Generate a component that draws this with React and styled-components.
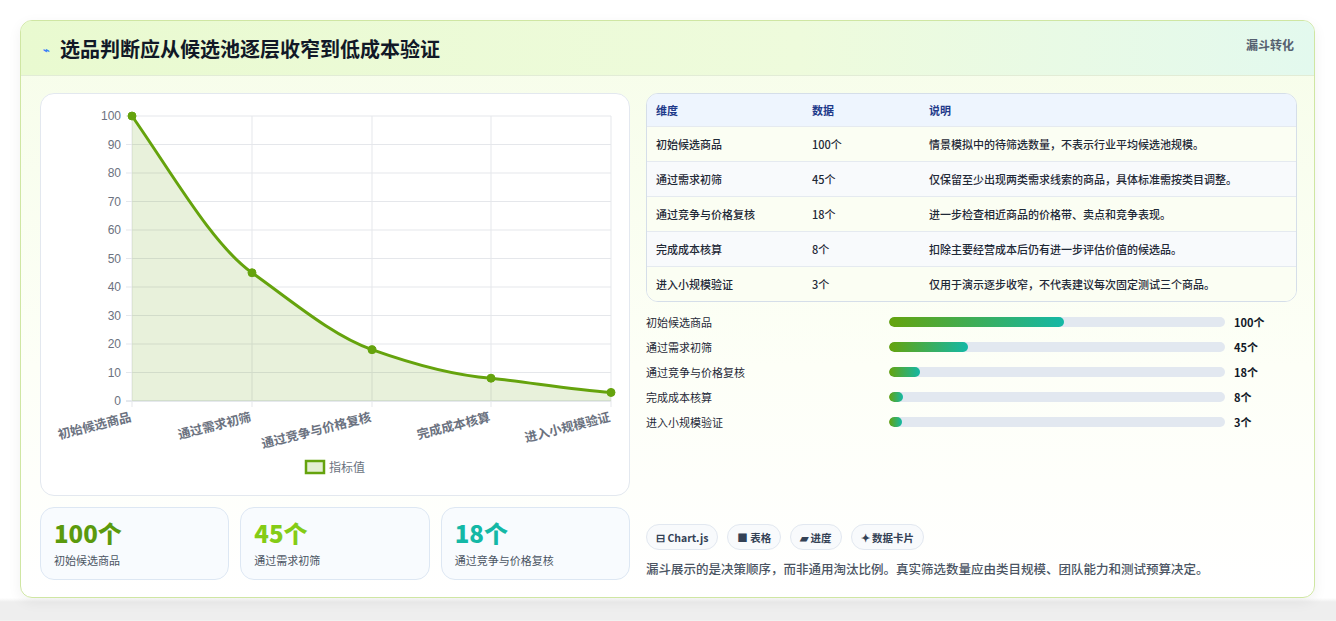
import styled, { createGlobalStyle } from "styled-components";

const Global = createGlobalStyle`
  body { margin: 0; background: #f1f2f1; font-family: "Noto Sans CJK SC", "Noto Sans", sans-serif; }
`;

const Page = styled.div`
  padding: 20px 20px 22px 20px;
  background: linear-gradient(#ffffff 0, #ffffff 598px, #eeeeee 602px);
`;

const Card = styled.div`
  width: 1295px;
  height: 578px;
  box-sizing: border-box;
  border: 1px solid #cfe6a3;
  border-radius: 12px;
  background: linear-gradient(180deg, #f6fde9 0%, #fdfff7 60%, #ffffff 100%);
  box-shadow: 0 4px 14px rgba(0, 0, 0, 0.06);
  overflow: hidden;
`;

const Header = styled.div`
  height: 55px;
  box-sizing: border-box;
  display: flex;
  align-items: flex-start;
  justify-content: space-between;
  padding: 13px 20px 0 22px;
  background: linear-gradient(90deg, #e9fad0 0%, #eefbdc 60%, #e3f9ee 100%);
  border-bottom: 1px solid #e2ecd6;
`;

const Title = styled.h1`
  margin: 0;
  font-size: 20px;
  font-weight: 700;
  color: #111827;
  display: flex;
  align-items: center;
  gap: 10px;
`;

const Tag = styled.span`
  font-size: 12px;
  font-weight: 700;
  color: #556070;
  margin-top: 2px;
`;

const Body = styled.div`
  display: grid;
  grid-template-columns: 590px 651px;
  gap: 16px;
  padding: 17px 19px 0 19px;
`;

const Col = styled.div`
  display: flex;
  flex-direction: column;
`;

const ChartBox = styled.div`
  height: 403px;
  box-sizing: border-box;
  border: 1px solid #e3e8ef;
  border-radius: 14px;
  background: #fff;
`;

const Stats = styled.div`
  display: grid;
  grid-template-columns: repeat(3, 1fr);
  gap: 11px;
  margin-top: 11px;
`;

const Stat = styled.div`
  height: 73px;
  box-sizing: border-box;
  border: 1px solid #dde7f3;
  border-radius: 14px;
  background: #f8fbfe;
  padding: 10px 13px;
`;

const StatNum = styled.div`
  font-size: 24px;
  font-weight: 800;
  line-height: 30px;
  color: ${(p) => p.$c};
`;

const StatLabel = styled.div`
  font-size: 11px;
  color: #4b5563;
  margin-top: 4px;
`;

const Table = styled.div`
  border: 1px solid #d5dee9;
  border-radius: 12px;
  overflow: hidden;
  background: #fff;
`;

const Row = styled.div`
  display: grid;
  grid-template-columns: 156px 117px 1fr;
  height: ${(p) => (p.$head ? 32 : 34)}px;
  align-items: center;
  padding-left: 9px;
  font-size: 11px;
  color: ${(p) => (p.$head ? "#1e3a8a" : "#1f2937")};
  font-weight: ${(p) => (p.$head ? 700 : 500)};
  background: ${(p) => (p.$head ? "#eef5fe" : p.$alt ? "#f8fafc" : "#fbfef3")};
  border-top: ${(p) => (p.$head ? "none" : "1px solid #e5eaf0")};
`;

const Bars = styled.div`
  display: flex;
  flex-direction: column;
  gap: 9px;
  margin-top: 12px;
`;

const BarRow = styled.div`
  display: grid;
  grid-template-columns: 243px 345px 1fr;
  align-items: center;
  height: 16px;
  font-size: 11px;
  color: #1f2937;
`;

const Track = styled.div`
  height: 10px;
  border-radius: 5px;
  background: #e2e8f0;
  overflow: hidden;
  margin-right: 9px;
`;

const Fill = styled.div`
  height: 100%;
  border-radius: 5px;
  background: linear-gradient(90deg, #65a30d, #14b8a6);
`;

const Val = styled.span`
  font-weight: 700;
  color: #111827;
`;

const Chips = styled.div`
  display: flex;
  gap: 9px;
  margin-top: 94px;
`;

const Chip = styled.span`
  height: 26px;
  box-sizing: border-box;
  padding: 0 9px;
  border: 1px solid #e2e8f0;
  border-radius: 13px;
  background: #f8fafc;
  display: flex;
  align-items: center;
  gap: 4px;
  font-size: 10.5px;
  font-weight: 700;
  color: #334155;
`;

const Note = styled.p`
  margin: 9px 0 0 0;
  font-size: 12.5px;
  font-weight: 500;
  color: #4b5563;
`;

const rows = [
  ["初始候选商品", "100个", "情景模拟中的待筛选数量，不表示行业平均候选池规模。", 100],
  ["通过需求初筛", "45个", "仅保留至少出现两类需求线索的商品，具体标准需按类目调整。", 45],
  ["通过竞争与价格复核", "18个", "进一步检查相近商品的价格带、卖点和竞争表现。", 18],
  ["完成成本核算", "8个", "扣除主要经营成本后仍有进一步评估价值的候选品。", 8],
  ["进入小规模验证", "3个", "仅用于演示逐步收窄，不代表建议每次固定测试三个商品。", 3],
];

const Chart = () => {
  const x0 = 91, x1 = 570, yT = 22, yB = 307;
  const xs = [91, 211, 331, 450, 570];
  const y = (v) => yB - (v / 100) * (yB - yT);
  const line = `M91 ${y(100)} C131 ${y(80)} 171 ${y(55)} 211 ${y(45)} C251 ${y(35)} 291 ${y(23)} 331 ${y(18)} C371 ${y(13)} 410 ${y(9)} 450 ${y(8)} C490 ${y(6.5)} 530 ${y(4)} 570 ${y(3)}`;
  return (
    <svg width="590" height="400" style={{ display: "block" }}>
      {[0, 10, 20, 30, 40, 50, 60, 70, 80, 90, 100].map((v) => (
        <g key={v}>
          <line x1={x0 - 6} x2={x1} y1={y(v)} y2={y(v)} stroke={v === 0 ? "#cbd2dc" : "#e5e7eb"} />
          <text x={80} y={y(v) + 4} textAnchor="end" fontSize="12" fill="#6b7280" fontFamily="Liberation Sans, sans-serif">{v}</text>
        </g>
      ))}
      {xs.map((x) => (
        <line key={x} x1={x} x2={x} y1={yT} y2={yB + 6} stroke="#e5e7eb" />
      ))}
      <path d={`${line} L570 ${yB} L91 ${yB} Z`} fill="rgba(101,163,13,0.15)" />
      <path d={line} fill="none" stroke="#65a30d" strokeWidth="3" />
      {rows.map((r, i) => (
        <circle key={i} cx={xs[i]} cy={y(r[3])} r="4" fill="#65a30d" stroke="#65a30d" />
      ))}
      {rows.map((r, i) => (
        <text key={r[0]} x={xs[i]} y={yB + 20} textAnchor="end" fontSize="12.5" fontWeight="600" fill="#6b7280"
          transform={`rotate(-14 ${xs[i]} ${yB + 20})`}>{r[0]}</text>
      ))}
      <rect x="265" y="367" width="18" height="12" fill="#e4efd2" stroke="#65a30d" strokeWidth="2.5" />
      <text x="288" y="378" fontSize="12" fill="#6b7280">指标值</text>
    </svg>
  );
};

export default function App() {
  return (
    <Page>
      <Global />
      <Card>
        <Header>
          <Title><span style={{ fontSize: 11, color: "#3b82f6" }}>⌁</span>选品判断应从候选池逐层收窄到低成本验证</Title>
          <Tag>漏斗转化</Tag>
        </Header>
        <Body>
          <Col>
            <ChartBox><Chart /></ChartBox>
            <Stats>
              <Stat><StatNum $c="#5b9a0d">100个</StatNum><StatLabel>初始候选商品</StatLabel></Stat>
              <Stat><StatNum $c="#84cc16">45个</StatNum><StatLabel>通过需求初筛</StatLabel></Stat>
              <Stat><StatNum $c="#14b8a6">18个</StatNum><StatLabel>通过竞争与价格复核</StatLabel></Stat>
            </Stats>
          </Col>
          <Col>
            <Table>
              <Row $head><span>维度</span><span>数据</span><span>说明</span></Row>
              {rows.map((r, i) => (
                <Row key={r[0]} $alt={i % 2 === 1}><span>{r[0]}</span><span>{r[1]}</span><span>{r[2]}</span></Row>
              ))}
            </Table>
            <Bars>
              {rows.map((r) => (
                <BarRow key={r[0]}>
                  <span>{r[0]}</span>
                  <Track><Fill style={{ width: `${Math.max(r[3] * 0.52, 4)}%` }} /></Track>
                  <Val>{r[1]}</Val>
                </BarRow>
              ))}
            </Bars>
            <Chips>
              <Chip>⊟ Chart.js</Chip>
              <Chip>■ 表格</Chip>
              <Chip>▰ 进度</Chip>
              <Chip>✦ 数据卡片</Chip>
            </Chips>
            <Note>漏斗展示的是决策顺序，而非通用淘汰比例。真实筛选数量应由类目规模、团队能力和测试预算决定。</Note>
          </Col>
        </Body>
      </Card>
    </Page>
  );
}
